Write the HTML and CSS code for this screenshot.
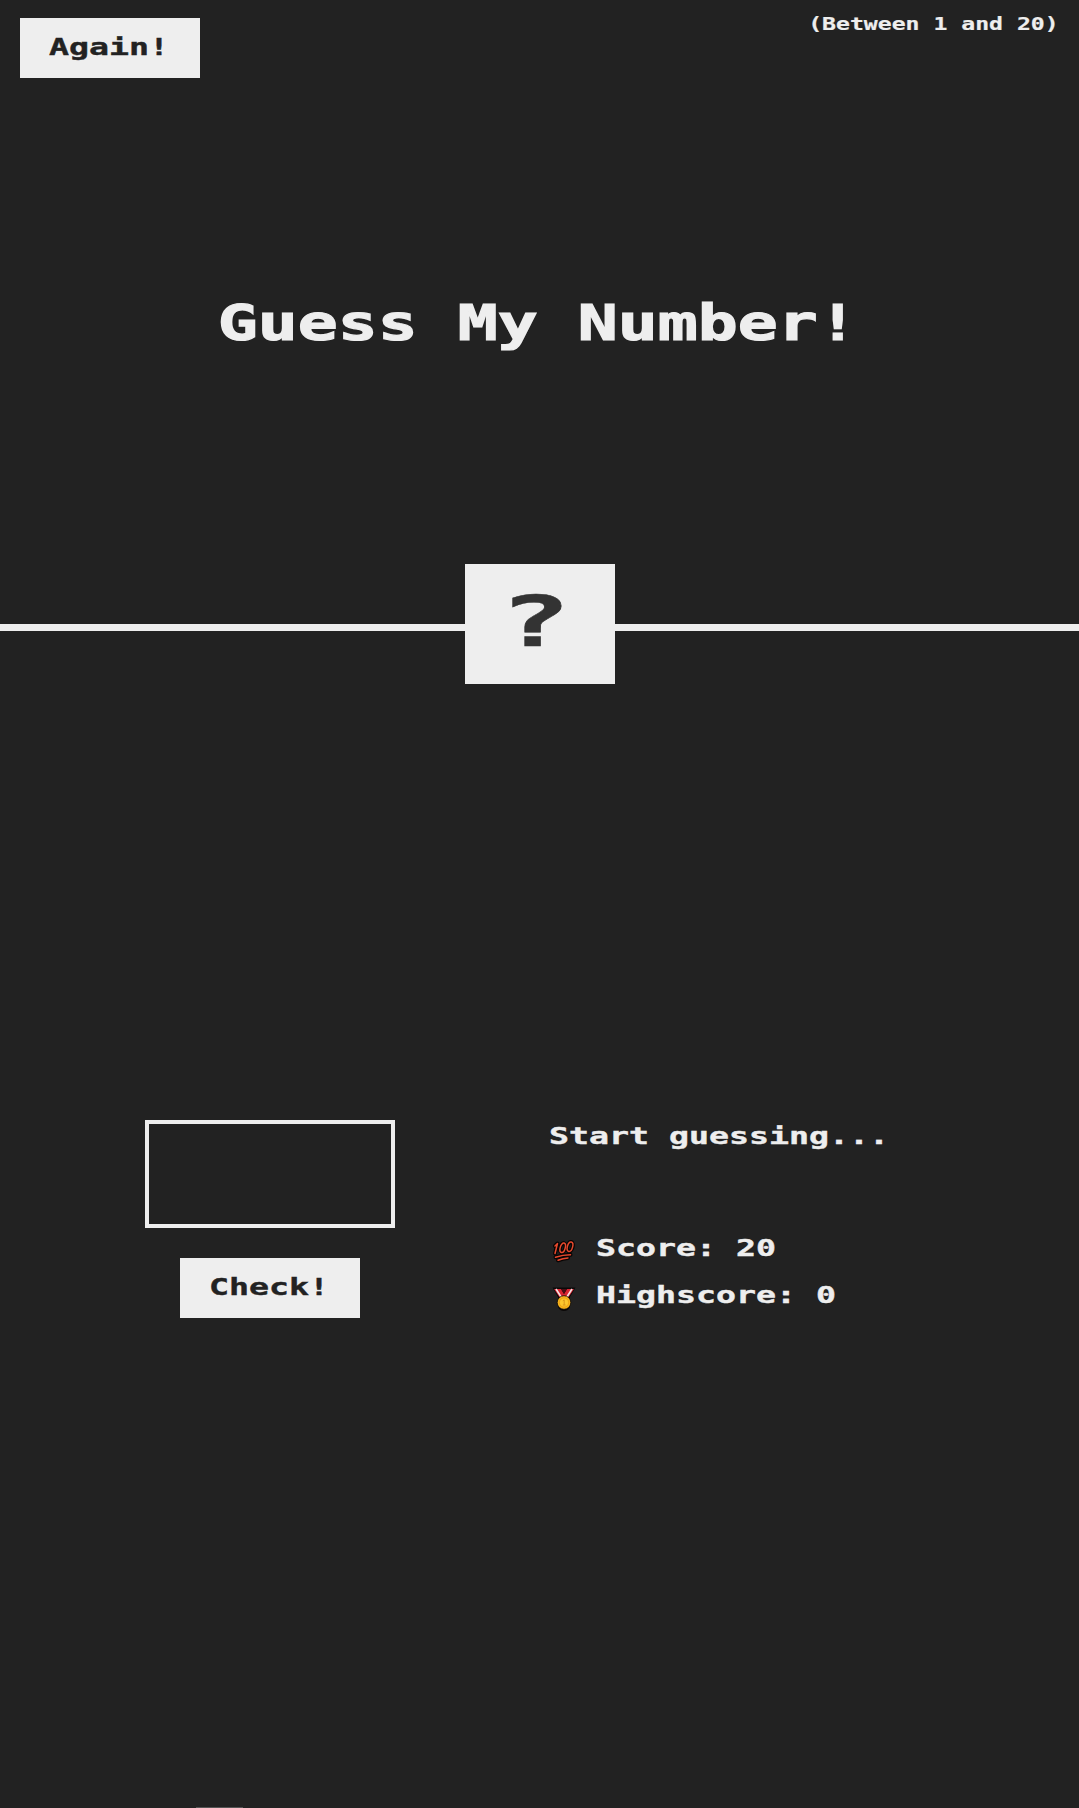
FILE: index.html
```
<!DOCTYPE html>
<html lang="en">
<head>
<meta charset="UTF-8">
<title>Guess My Number!</title>
<link rel="stylesheet" href="styles.css">
</head>
<body>
<header>
  <div class="topbar">
    <button class="btn again"><span class="wide">Again!</span></button>
    <p class="between"><span class="wide">(Between 1 and 20)</span></p>
  </div>
  <h1><span class="wide">Guess My Number!</span></h1>
  <div class="number"><span class="wide">?</span></div>
</header>
<main>
  <section class="left">
    <input type="number" class="guess" aria-label="Guess">
    <button class="btn check"><span class="wide">Check!</span></button>
  </section>
  <section class="right">
    <p class="message"><span class="wide">Start guessing...</span></p>
    <p class="label">
      <svg class="icon" viewBox="0 0 24 24" fill="none" stroke-linecap="round" stroke-linejoin="round">
        <g stroke="#080404" stroke-width="4">
          <path d="M3 6 5.5 3.5 3 13.5"/>
          <ellipse cx="10.7" cy="7.8" rx="2.5" ry="4.9" transform="rotate(16 10.7 7.8)"/>
          <ellipse cx="18" cy="6.7" rx="2.6" ry="4.9" transform="rotate(16 18 6.7)"/>
          <path d="M3.5 17.2Q11 14.7 18.5 14.7M6 20.3Q11 18.2 16 17.9"/>
        </g>
        <g stroke="#e6492d" stroke-width="1.5">
          <path d="M3 6 5.5 3.5 3 13.5"/>
          <ellipse cx="10.7" cy="7.8" rx="2.5" ry="4.9" transform="rotate(16 10.7 7.8)"/>
          <ellipse cx="18" cy="6.7" rx="2.6" ry="4.9" transform="rotate(16 18 6.7)"/>
          <path d="M3.5 17.2Q11 14.7 18.5 14.7M6 20.3Q11 18.2 16 17.9"/>
        </g>
      </svg>
      <span class="wide">Score: 20</span>
    </p>
    <p class="label">
      <svg class="icon" viewBox="0 0 24 24">
        <path d="M.5.5h23L18 10v10a6.5 6.5 0 0 1-12 0V10Z" fill="#0b0808"/>
        <path d="M2 2h7l3 5 3-5h7l-6 9H8Z" fill="#d92532"/>
        <path d="m4 2 5.5 8.5M20 2l-5.5 8.5" stroke="#f4e5e5" stroke-width="1.6"/>
        <path d="M9 2h6l-3 5Z" fill="#4a0d13"/>
        <circle cx="12" cy="15.5" r="6.8" fill="#f9b51b" stroke="#0b0808" stroke-width=".8"/>
        <circle cx="12" cy="15.5" r="4.6" fill="#fcc72d" stroke="#e89a12" stroke-width=".8"/>
        <path d="m10.8 13.8 1.4-.9v5M10.8 18h2.8" fill="none" stroke="#d9951a" stroke-width="1"/>
      </svg>
      <span class="wide">Highscore: 0</span>
    </p>
  </section>
</main>
<footer><div class="tab"></div></footer>
</body>
</html>
```
FILE: styles.css
```
* {
  margin: 0;
  padding: 0;
  box-sizing: border-box;
}

body {
  height: 1808px;
  display: flex;
  flex-direction: column;
  overflow: hidden;
  background: #222;
  color: #eee;
  font: bold 23.3px "DejaVu Sans Mono", monospace;
}

.wide {
  display: inline-block;
  white-space: pre;
  transform: scaleX(1.426);
  -webkit-text-stroke: 0.4px currentColor;
}

header {
  position: relative;
  height: 631px;
  padding: 18px 20px 0;
  border-bottom: 7px solid #eee;
}

.topbar {
  display: flex;
  justify-content: space-between;
  height: 60px;
}

.btn {
  width: 180px;
  height: 60px;
  padding: 0 2px 2px 0;
  border: none;
  background: #eee;
  color: #222;
  font: inherit;
  line-height: 58px;
}

.between {
  font-size: 17.8px;
  line-height: 12px;
}

.between .wide {
  transform: scaleX(1.3);
  transform-origin: right;
  -webkit-text-stroke-width: 0.2px;
}

h1 {
  margin-top: 205px;
  padding-right: 4px;
  font-size: 50px;
  line-height: 80px;
  text-align: center;
}

h1 .wide {
  transform: scaleX(1.329);
  -webkit-text-stroke-width: 1.2px;
}

/* Sits across the header's bottom rule */
.number {
  position: absolute;
  left: 465px;
  top: 564px;
  width: 150px;
  height: 120px;
  background: #eee;
  color: #333;
  font-size: 70px;
  line-height: 116px;
  text-align: center;
}

.number .wide {
  transform: translateX(-5px) scaleX(1.7);
  -webkit-text-stroke-width: 0.5px;
}

main {
  flex: 1;
  display: flex;
  padding-top: 489px;
}

.left {
  width: 540px;
  display: flex;
  flex-direction: column;
  align-items: center;
  gap: 30px;
}

.guess {
  width: 250px;
  height: 108px;
  border: 4px solid #eee;
  background: none;
  color: inherit;
  font: inherit;
  text-align: center;
}

.right {
  flex: 1;
  padding-left: 9px;
}

.right .wide {
  transform-origin: left;
}

.message {
  height: 104px;
  line-height: 32px;
}

.label {
  display: flex;
  align-items: flex-start;
  gap: 20px;
  height: 47px;
  padding-left: 3px;
  line-height: 48px;
}

.icon {
  width: 24px;
  height: 24px;
  margin-top: 16px;
}

footer {
  height: 1px;
  padding-left: 196px;
}

.tab {
  width: 47px;
  height: 1px;
  background: #555;
}
```
